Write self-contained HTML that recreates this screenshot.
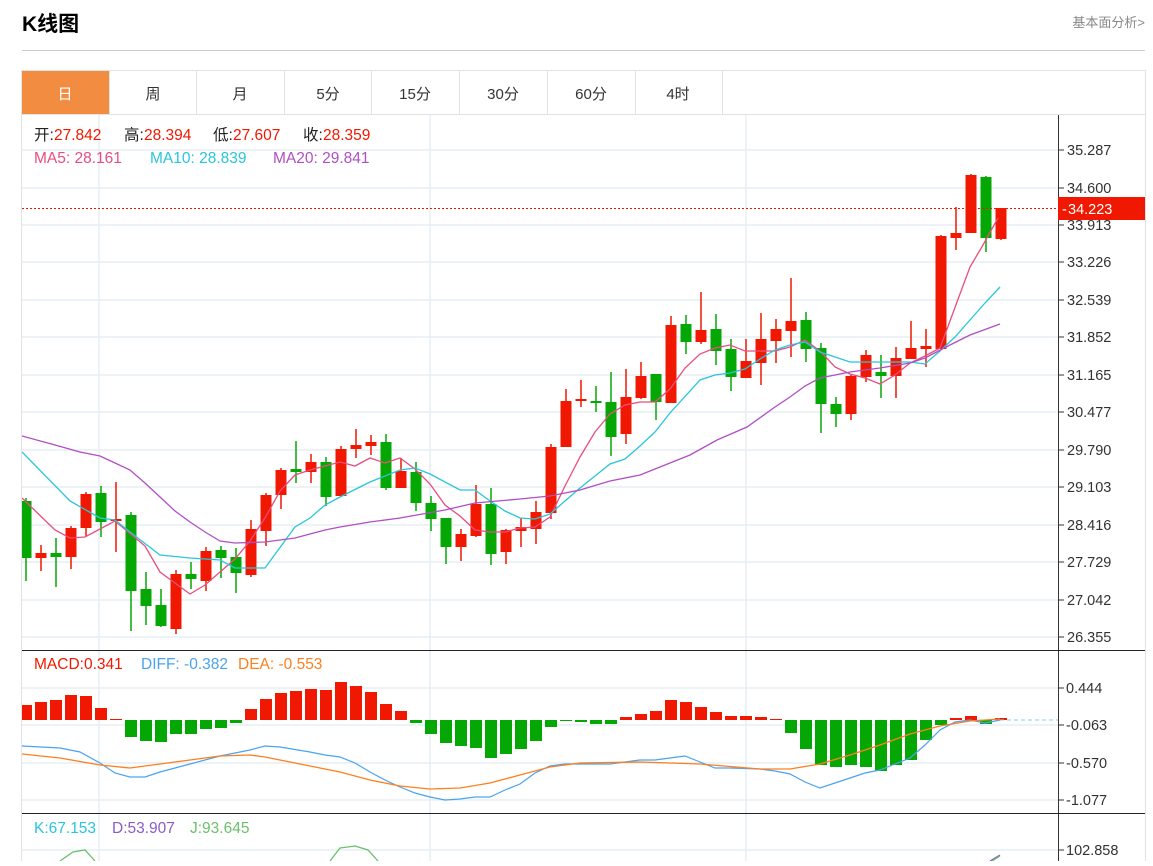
<!DOCTYPE html>
<html><head><meta charset="utf-8"><style>
body{margin:0;background:#fff;width:1153px;height:861px;overflow:hidden;font-family:"Liberation Sans","Noto Sans CJK SC",sans-serif;}
svg text{font-family:"Liberation Sans","Noto Sans CJK SC",sans-serif;}
</style></head><body>
<svg id="s" width="1153" height="861" xmlns="http://www.w3.org/2000/svg">
<defs><clipPath id="cp"><rect x="22" y="115" width="1036" height="746"/></clipPath></defs>
<text x="22" y="31" font-size="21" font-weight="bold" fill="#000">K线图</text>
<text x="1145" y="27" font-size="13" fill="#888" text-anchor="end">基本面分析&gt;</text>
<line x1="22" y1="50.5" x2="1145" y2="50.5" stroke="#ccc"/>
<rect x="21.5" y="70.5" width="1124" height="800" fill="none" stroke="#e2e2e2"/>
<rect x="22" y="71" width="87" height="43" fill="#f28c40"/>
<g stroke="#e2e2e2"><line x1="109.5" y1="71" x2="109.5" y2="114"/><line x1="196.5" y1="71" x2="196.5" y2="114"/><line x1="284.5" y1="71" x2="284.5" y2="114"/><line x1="371.5" y1="71" x2="371.5" y2="114"/><line x1="459.5" y1="71" x2="459.5" y2="114"/><line x1="547.5" y1="71" x2="547.5" y2="114"/><line x1="635.5" y1="71" x2="635.5" y2="114"/><line x1="722.5" y1="71" x2="722.5" y2="114"/><line x1="22" y1="114.5" x2="1145" y2="114.5"/></g>
<g font-size="15" text-anchor="middle" fill="#333"><text x="65" y="99" fill="#fff">日</text><text x="153" y="99">周</text><text x="240" y="99">月</text><text x="328" y="99">5分</text><text x="415" y="99">15分</text><text x="503" y="99">30分</text><text x="591" y="99">60分</text><text x="678" y="99">4时</text></g>
<g id="grid" stroke="#e6edf4" stroke-width="1.5"></g>
<g id="plot" clip-path="url(#cp)"></g>
<line x1="1058.5" y1="115" x2="1058.5" y2="861" stroke="#333"/>
<line x1="22" y1="650.5" x2="1145" y2="650.5" stroke="#222"/>
<line x1="22" y1="813.5" x2="1145" y2="813.5" stroke="#222"/>
<g id="ax" font-size="14.5" fill="#333"></g>
<line x1="22" y1="208.5" x2="1058" y2="208.5" stroke="#f01800" stroke-dasharray="2,2"/>
<rect x="1058" y="197" width="87" height="23" fill="#f01800"/>
<text x="1062" y="214" font-size="14.5" fill="#fff">-</text><text x="1068" y="214" font-size="14.5" fill="#fff">34.223</text>
<g font-size="15.5">
<text x="34" y="140" fill="#222">开:</text><text x="54" y="140" fill="#f01800">27.842</text>
<text x="124" y="140" fill="#222">高:</text><text x="144" y="140" fill="#f01800">28.394</text>
<text x="213" y="140" fill="#222">低:</text><text x="233" y="140" fill="#f01800">27.607</text>
<text x="303" y="140" fill="#222">收:</text><text x="323" y="140" fill="#f01800">28.359</text>
<text x="34" y="163" fill="#e84d7f">MA5: 28.161</text><text x="150" y="163" fill="#29c5dc">MA10: 28.839</text><text x="273" y="163" fill="#b04fc4">MA20: 29.841</text>
<text x="34" y="669" fill="#f01800">MACD:0.341</text><text x="141" y="669" fill="#4aa3f0">DIFF: -0.382</text><text x="238" y="669" fill="#ff7f1e">DEA: -0.553</text>
<text x="34" y="833" fill="#29c5dc">K:67.153</text><text x="112" y="833" fill="#8a5cc7">D:53.907</text><text x="190" y="833" fill="#6cbf6c">J:93.645</text></g>
</svg>
<script>
var N="http://www.w3.org/2000/svg",s=document.getElementById('s');
function el(p,t,a){var e=document.createElementNS(N,t);for(var k in a)e.setAttribute(k,a[k]);p.appendChild(e);return e;}
var G=document.getElementById('grid'),P=document.getElementById('plot'),A=document.getElementById('ax');
[99,430,746].forEach(function(x){el(G,'line',{x1:x,y1:115,x2:x,y2:861});});
var py=[150,188,225,262,300,337,375,412,450,487,525,562,600,637],pl=["35.287","34.600","33.913","33.226","32.539","31.852","31.165","30.477","29.790","29.103","28.416","27.729","27.042","26.355"];
py.forEach(function(y,i){el(G,'line',{x1:22,y1:y,x2:1058,y2:y});el(A,'line',{x1:1058,y1:y,x2:1064,y2:y,stroke:'#333'});var t=el(A,'text',{x:1067,y:y+5});t.textContent=pl[i];});
[[688,"0.444"],[725,"-0.063"],[763,"-0.570"],[800,"-1.077"],[850,"102.858"]].forEach(function(a){el(G,'line',{x1:22,y1:a[0],x2:1058,y2:a[0]});el(A,'line',{x1:1058,y1:a[0],x2:1064,y2:a[0],stroke:'#333'});var t=el(A,'text',{x:1066,y:a[0]+5});t.textContent=a[1];});
var C=[[0,501,558,498,581],[1,553,558,545,571],[0,553,557,538,587],[1,528,557,526,569],[1,494,528,492,536],[0,493,522,486,537],[1,519,521,482,552],[0,515,591,512,631],[0,589,606,572,625],[0,605,626,589,627],[1,574,629,570,634],[0,574,579,562,589],[1,551,581,547,591],[0,550,558,546,578],[0,557,573,548,593],[1,529,575,520,577],[1,495,531,493,546],[1,470,495,468,509],[0,469,472,441,483],[1,462,472,454,483],[0,462,497,457,506],[1,449,496,446,497],
[1,445,449,429,458],[1,442,446,435,455],[0,442,488,434,490],[1,471,488,458,488],[0,472,503,462,511],[0,503,519,496,531],[0,518,547,518,564],[1,534,547,529,561],[1,504,536,485,537],[0,504,554,488,565],[1,530,552,529,564],[1,527,531,518,547],[1,512,529,501,544],[1,447,513,444,519],[1,401,447,389,447],[1,399,401,380,407],[0,401,403,386,412],[0,402,437,372,456],[1,397,434,369,444],[1,376,398,362,399],
[0,374,402,374,420],[1,325,403,316,403],[0,324,342,315,354],[1,330,342,292,344],[0,329,351,314,365],[0,349,377,339,391],[1,361,378,339,378],[1,339,363,313,385],[1,329,341,319,363],[1,321,331,278,357],[0,320,349,312,362],[0,348,404,343,433],[0,404,414,397,427],[1,376,414,375,420],[1,355,377,350,382],[0,372,376,355,398],[1,358,376,347,398],[1,348,359,321,359],[1,346,349,329,367],[1,236,349,235,349],[1,233,238,207,250],[1,175,233,174,233],[0,177,238,176,252],[1,208,239,208,240]];
C.forEach(function(c,i){var x=26+15*i,col=c[0]?'#f01800':'#05a705';el(P,'line',{x1:x,y1:c[3],x2:x,y2:c[4],stroke:col,'stroke-width':1.5});el(P,'rect',{x:x-5.5,y:c[1],width:11,height:Math.max(2,c[2]-c[1]),fill:col});});
function pl2(pts,col,w){el(P,'polyline',{points:pts,fill:'none',stroke:col,'stroke-width':w||1.3});}
pl2("22,498 55,530 70,538 85,537 115,521 145,546 160,572 190,594 205,585 235,559 250,541 265,518 280,491 295,475 310,470 325,466 340,462 355,466 370,458 385,463 400,458 415,469 430,484 445,505 460,516 475,530 490,532 505,532 520,528 535,527 550,517 565,486 580,457 595,432 610,414 625,405 640,402 655,402 670,389 685,368 700,354 715,348 730,345 745,351 760,351 775,351 790,347 805,340 820,351 835,367 850,374 865,378 880,384 895,375 910,363 925,356 940,348 957,302 970,267 983,245 998,218","#e84d7f");
pl2("22,452 70,501 100,518 115,520 130,532 160,555 190,558 220,560 235,568 265,568 295,527 310,518 325,505 340,497 370,482 400,470 415,468 430,474 460,490 475,490 490,501 505,511 520,518 535,519 550,514 565,501 580,488 595,476 610,464 625,459 640,446 655,432 670,413 700,380 715,375 730,373 745,369 760,359 775,350 790,345 805,342 820,352 850,362 880,362 910,362 925,364 940,351 955,337 970,320 985,303 1000,287","#29c5dc");
pl2("22,436 55,445 80,452 100,456 115,463 130,470 145,483 160,497 175,511 190,522 205,532 220,541 235,543 265,542 295,538 325,530 340,527 370,522 400,518 445,510 475,503 520,499 550,496 580,490 610,481 640,475 660,467 690,455 717,440 747,427 775,407 790,397 805,386 820,378 850,372 880,368 910,363 925,358 950,345 970,335 1000,324","#b04fc4");
var B=[705,702,700,695,696,708,719,737,741,742,734,734,729,728,723,709,699,693,691,689,690,682,686,692,704,711,723,734,743,746,748,758,754,749,741,727,721,722,724,724,717,714,711,700,702,707,712,716,716,717,719,733,749,765,767,765,767,771,765,760,740,725,718,716,724,718];
B.forEach(function(b,i){var x=26+15*i,z=720;if(b<z)el(P,'rect',{x:x-6,y:b,width:12,height:z-b,fill:'#f01800'});else el(P,'rect',{x:x-6,y:z,width:12,height:b-z,fill:'#05a705'});});
el(P,'line',{x1:1000,y1:720,x2:1058,y2:720,stroke:'#7fd0ee','stroke-dasharray':'4,3'});
pl2("22,746 60,748 80,752 100,763 115,773 130,777 145,777 160,772 175,768 190,764 220,756 250,750 265,746 280,747 310,752 325,755 340,757 355,763 370,772 385,780 400,787 415,793 430,797 445,800 460,799 475,797 490,797 505,790 520,784 535,773 550,766 565,764 610,764 625,762 640,760 655,760 670,758 685,756 700,762 715,768 730,768 760,769 775,771 790,774 805,782 820,788 835,783 850,778 865,773 880,770 895,764 910,758 925,745 940,730 955,722 970,720 985,723 1000,720","#4aa3f0",1.2);
pl2("22,754 60,758 100,765 130,768 160,764 190,760 220,756 250,755 265,757 310,766 340,772 370,780 400,786 430,789 460,788 490,783 520,775 550,767 580,763 640,762 700,764 760,769 790,769 820,764 850,755 880,745 910,734 940,726 970,721 1000,719","#ff7f1e",1.3);
pl2("60,861 73,852 85,850 95,861","#6cbf6c");pl2("330,861 340,848 355,846 368,850 378,861","#6cbf6c");pl2("990,861 1000,855","#8a5cc7");pl2("992,861 1000,856","#6cbf6c");
</script>
</body></html>
